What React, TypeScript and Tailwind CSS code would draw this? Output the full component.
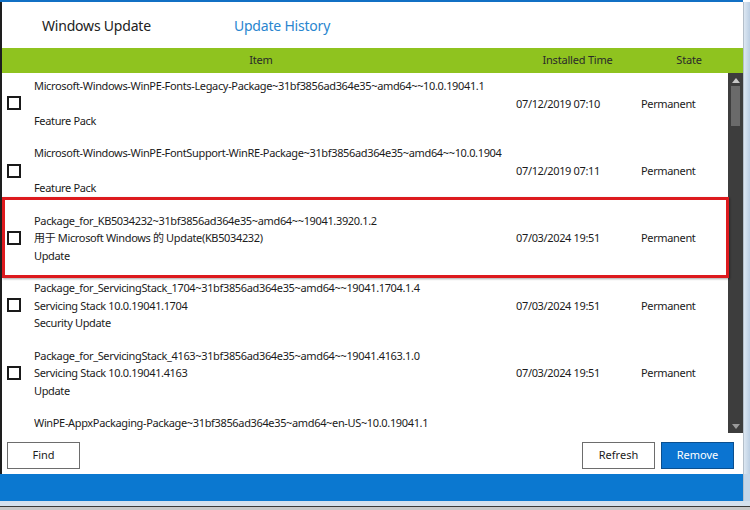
import React from 'react'

type Row = {
  title: string
  sub: string
  kind: string
  time: string
  state: string
}

const rows: Row[] = [
  {
    title: 'Microsoft-Windows-WinPE-Fonts-Legacy-Package~31bf3856ad364e35~amd64~~10.0.19041.1',
    sub: '',
    kind: 'Feature Pack',
    time: '07/12/2019 07:10',
    state: 'Permanent',
  },
  {
    title: 'Microsoft-Windows-WinPE-FontSupport-WinRE-Package~31bf3856ad364e35~amd64~~10.0.19041.1',
    sub: '',
    kind: 'Feature Pack',
    time: '07/12/2019 07:11',
    state: 'Permanent',
  },
  {
    title: 'Package_for_KB5034232~31bf3856ad364e35~amd64~~19041.3920.1.2',
    sub: '用于 Microsoft Windows 的 Update(KB5034232)',
    kind: 'Update',
    time: '07/03/2024 19:51',
    state: 'Permanent',
  },
  {
    title: 'Package_for_ServicingStack_1704~31bf3856ad364e35~amd64~~19041.1704.1.4',
    sub: 'Servicing Stack 10.0.19041.1704',
    kind: 'Security Update',
    time: '07/03/2024 19:51',
    state: 'Permanent',
  },
  {
    title: 'Package_for_ServicingStack_4163~31bf3856ad364e35~amd64~~19041.4163.1.0',
    sub: 'Servicing Stack 10.0.19041.4163',
    kind: 'Update',
    time: '07/03/2024 19:51',
    state: 'Permanent',
  },
  {
    title: 'WinPE-AppxPackaging-Package~31bf3856ad364e35~amd64~en-US~10.0.19041.1',
    sub: '',
    kind: '',
    time: '',
    state: '',
  },
]

function UpdateRow({ r }: { r: Row }) {
  return (
    <div className="flex h-[67.4px] shrink-0 pt-[4px] text-[11px] tracking-[-0.35px] leading-[17.5px] text-[#1b1b1b]">
      <div className="flex w-[32px] shrink-0 items-center h-[52.5px] pl-[5px]">
        <div className="w-[14px] h-[14px] border-2 border-[#1a1a1a] bg-white" />
      </div>
      <div className="w-[468px] shrink-0 overflow-hidden whitespace-nowrap">
        <div>{r.title}</div>
        <div className="h-[17.5px]">{r.sub}</div>
        <div>{r.kind}</div>
      </div>
      <div className="w-[139px] shrink-0 pl-[14px] pt-[17.5px] whitespace-nowrap">{r.time}</div>
      <div className="pt-[17.5px]">{r.state}</div>
    </div>
  )
}

export default function App() {
  return (
    <div
      className="relative w-[750px] h-[510px] overflow-hidden bg-white"
      style={{ fontFamily: '"Noto Sans", "Noto Sans CJK SC", sans-serif' }}
    >
      <div className="h-[2px] bg-[#1170c4] mr-[7px]" />
      <div className="flex h-[472px]">
        <div className="flex-1 flex flex-col border-l-2 border-[#1e1e1e]">
          <div className="h-[46px] flex items-center text-[14px] tracking-[-0.2px] text-[#222]">
            <span className="ml-[40px]">Windows Update</span>
            <span className="ml-[83px] text-[#2a86cf]">Update History</span>
          </div>
          <div className="h-[25px] flex items-center bg-[#8fc31f] text-[11px] tracking-[-0.2px] text-[#2a2a2a]">
            <div className="w-[518px] text-center">Item</div>
            <div className="w-[115px] text-center">Installed Time</div>
            <div className="flex-1 text-center">State</div>
          </div>
          <div className="relative h-[360px] flex overflow-hidden">
            <div className="flex-1 flex flex-col overflow-hidden">
              {rows.map((r, i) => (
                <UpdateRow key={i} r={r} />
              ))}
            </div>
            <div className="w-[15px] h-[360px] bg-[#3d3d3d] flex flex-col items-center">
              <svg width="10" height="8" viewBox="0 0 10 8" className="mt-[3px]">
                <path d="M1 7 L5 2 L9 7 Z" fill="#c8c8c8" />
              </svg>
              <div className="mt-[2px] w-[9px] h-[40px] bg-[#6a6a6a]" />
              <div className="flex-1" />
              <svg width="10" height="8" viewBox="0 0 10 8" className="mb-[3px]">
                <path d="M1 2 L9 2 L5 7 Z" fill="#9a9a9a" />
              </svg>
            </div>
          </div>
          <div className="flex-1 flex items-center pl-[5px] pt-[4px] text-[11px] text-[#1b1b1b]">
            <button className="w-[73px] h-[27px] border border-[#6d6d6d] bg-white">Find</button>
            <div className="flex-1" />
            <button className="w-[73px] h-[27px] border border-[#6d6d6d] bg-white">Refresh</button>
            <button className="ml-[6px] mr-[9px] w-[73px] h-[27px] border border-[#0a4f8f] bg-[#0b74d1] text-white">
              Remove
            </button>
          </div>
        </div>
        <div className="w-[7px] border-l border-[#b4bfca] bg-gradient-to-r from-[#dce7f2] to-[#bccfe3]" />
      </div>
      <div className="flex h-[27px]">
        <div className="flex-1 bg-[#0b78d0]" />
        <div className="w-[7px] border-l border-[#b4bfca] bg-[#c5d6e8]" />
      </div>
      <div className="h-[5px] bg-[#d4e1ee]" />
      <div className="h-[1px] bg-[#3a3a3a]" />
      <div className="h-[3px] bg-[#c8c8c8]" />

      <div className="absolute left-[2px] top-[197px] w-[727px] h-[81px] border-[3px] border-[#dd1a1e] shadow-[1px_1px_2px_rgba(0,0,0,0.35)]" />
    </div>
  )
}
